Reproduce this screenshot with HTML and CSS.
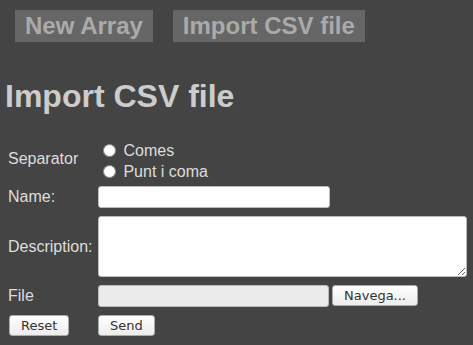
FILE: index.html
```html
<!DOCTYPE html>
<html lang="ca">

<head>
    <meta charset="UTF-8">
    <title>Import CSV file</title>
    <link rel="stylesheet" href="styles.css">
</head>

<body>
    <div id="menu">
        <a class="menu-item" href="#">New Array</a>
        <a class="menu-item" href="#">Import CSV file</a>
    </div>

    <h1>Import CSV file</h1>

    <form id="csv-form">
        <label class="field-label">Separator</label>
        <div class="radio-group">
            <label><input type="radio" name="sep" value="comma"> Comes</label>
            <label><input type="radio" name="sep" value="semicolon"> Punt i coma</label>
        </div>

        <label class="field-label" for="name">Name:</label>
        <div><input type="text" id="name" class="text-input"></div>

        <label class="field-label" for="description">Description:</label>
        <div><textarea id="description"></textarea></div>

        <label class="field-label">File</label>
        <div class="file-row">
            <input type="text" class="file-field" readonly>
            <button type="button" class="btn">Navega...</button>
        </div>

        <div><button type="reset" class="btn reset-btn">Reset</button></div>
        <div><button type="submit" class="btn">Send</button></div>
    </form>
</body>

</html>
```
FILE: styles.css
```css
body {
    font-family: "Liberation Sans", Arial, sans-serif;
    background-color: #444;
    color: #ddd;
    margin: 0;
    padding: 0;
}

#menu {
    display: flex;
    gap: 20px;
    padding: 10px 0 0 15px;
}

.menu-item {
    display: block;
    background-color: #666;
    color: #aaa;
    font-size: 24px;
    font-weight: bold;
    line-height: 32px;
    padding: 0 10px;
    text-decoration: none;
}

h1 {
    color: #ccc;
    font-size: 32px;
    margin: 34px 0 0 5px;
    line-height: 40px;
}

#csv-form {
    display: grid;
    grid-template-columns: 90px auto;
    align-items: center;
    row-gap: 8px;
    margin: 24px 0 0 8px;
    font-size: 16px;
}

.radio-group {
    margin-bottom: -4px;
}

.radio-group label {
    display: block;
    line-height: 21px;
}

.radio-group input {
    margin: 0 3px 0 5px;
    vertical-align: -1px;
}

.text-input,
.file-field,
textarea {
    box-sizing: border-box;
    border: 1px solid #bbb;
    border-radius: 3px;
    background-color: #fff;
    outline: none;
    display: block;
}

.text-input {
    width: 232px;
    height: 22px;
}

textarea {
    width: 369px;
    height: 61px;
    resize: both;
}

.file-row {
    display: flex;
    gap: 3px;
}

.file-field {
    width: 231px;
    height: 22px;
    background-color: #ebebeb;
}

.btn {
    font-family: "DejaVu Sans", sans-serif;
    font-size: 13px;
    color: #333;
    background: linear-gradient(#fff, #ececec);
    border: 1px solid #aaa;
    border-radius: 3px;
    height: 21px;
    padding: 0 11px;
    margin: 0;
}

.reset-btn {
    margin-left: 1px;
}
```
